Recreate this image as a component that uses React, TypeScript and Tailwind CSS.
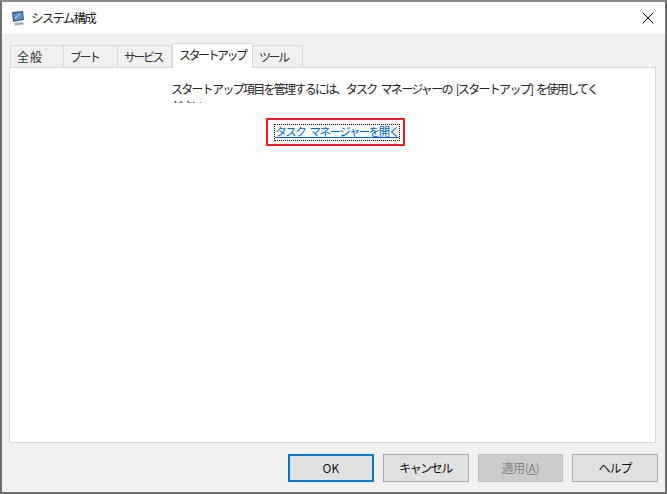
import { X } from 'lucide-react'

const font = { fontFamily: '"Noto Sans CJK JP", "Liberation Sans", sans-serif' }

function MonitorIcon() {
  return (
    <svg width="16" height="16" viewBox="0 0 16 16" className="ml-[8px] shrink-0">
      <path d="M2 2 L13 1 L14 10 L3 12 Z" fill="#4a5578" />
      <path d="M3.5 3.2 L12 2.5 L12.8 9 L4.2 10.5 Z" fill="#5b8fd6" />
      <path d="M5 8.5 L10 4" stroke="#d6e6f7" strokeWidth="1" />
      <path d="M4 13 L13 12 L14 14.5 L5 15.5 Z" fill="#a9adb3" />
    </svg>
  )
}

const tabs = [
  { label: '全般', w: 'w-[54px] tracking-[1px]' },
  { label: 'ブート', w: 'w-[55px] tracking-[-2.5px]' },
  { label: 'サービス', w: 'w-[55px] tracking-[-2.5px]' },
  { label: 'スタートアップ', w: 'w-[81px] tracking-[-2.5px]', active: true },
  { label: 'ツール', w: 'w-[51px] tracking-[-2.5px]' },
]

function DialogButton({ label, primary, disabled }: { label: React.ReactNode; primary?: boolean; disabled?: boolean }) {
  return (
    <button
      className={
        'flex h-[28px] w-[86px] items-center justify-center text-[12px] ' +
        (primary
          ? 'border-2 border-[#0078d7] bg-[#e1e1e1] text-[#111]'
          : disabled
            ? 'border border-[#bfbfbf] bg-[#cccccc] text-[#838383]'
            : 'border border-[#adadad] bg-[#e1e1e1] text-[#111]')
      }
    >
      {label}
    </button>
  )
}

export default function App() {
  return (
    <div style={font} className="flex h-[494px] w-[667px] flex-col border-2 border-[#6f6f6f] border-t-[#8a8a8a] bg-[#f0f0f0] text-[#111]">
      <header className="flex h-[32px] shrink-0 items-center bg-white">
        <MonitorIcon />
        <span className="ml-[5px] text-[12.5px] tracking-[-1.8px] text-[#222]">システム構成</span>
        <X size={20} strokeWidth={1.2} className="ml-auto mr-[7px] text-black" />
      </header>

      <div className="flex flex-1 flex-col px-[7px]">
        <div className="ml-[2px] mt-[9px] flex h-[24px] items-end">
          {tabs.map((t) => (
            <div
              key={t.label}
              className={
                'flex items-center justify-start whitespace-nowrap border border-[#d9d9d9] pl-[6px] text-[12px] ' +
                t.w +
                (t.active
                  ? ' z-10 -mb-px h-[25px] border-b-0 bg-white pb-[2px] text-[#222]'
                  : ' -ml-px h-[22px] border-b-0 bg-[#f0f0f0] text-[#333]')
              }
            >
              {t.label}
            </div>
          ))}
        </div>

        <main className="h-[376px] w-[647px] border border-[#d9d9d9] bg-white">
          <div className="ml-[161px] mt-[12px] h-[23px] w-[440px] overflow-hidden whitespace-nowrap text-[12px] leading-[17px] tracking-[-1.72px] text-[#222] [word-spacing:3px]">
            スタートアップ項目を管理するには、タスク マネージャーの [スタートアップ] を使用してく
            <br />
            ださい。
          </div>
          <div className="ml-[256px] mt-[15px] flex h-[28px] w-[139px] items-center justify-center border-2 border-[#ed1c24] pl-[3px]">
            <a className="flex h-[17px] items-center whitespace-nowrap border border-dotted border-black text-[11.5px] tracking-[-1.5px] text-[#0066cc] underline [word-spacing:3px]">
              タスク マネージャーを開く
            </a>
          </div>
        </main>

        <footer className="ml-[279px] mt-[11px] flex gap-[9px]">
          <DialogButton label="OK" primary />
          <DialogButton label={<span className="tracking-[-1.5px]">キャンセル</span>} />
          <DialogButton
            disabled
            label={
              <span className="tracking-[-0.3px]">
                適用(<span className="underline">A</span>)
              </span>
            }
          />
          <DialogButton label={<span className="tracking-[-1px]">ヘルプ</span>} />
        </footer>
      </div>
    </div>
  )
}
